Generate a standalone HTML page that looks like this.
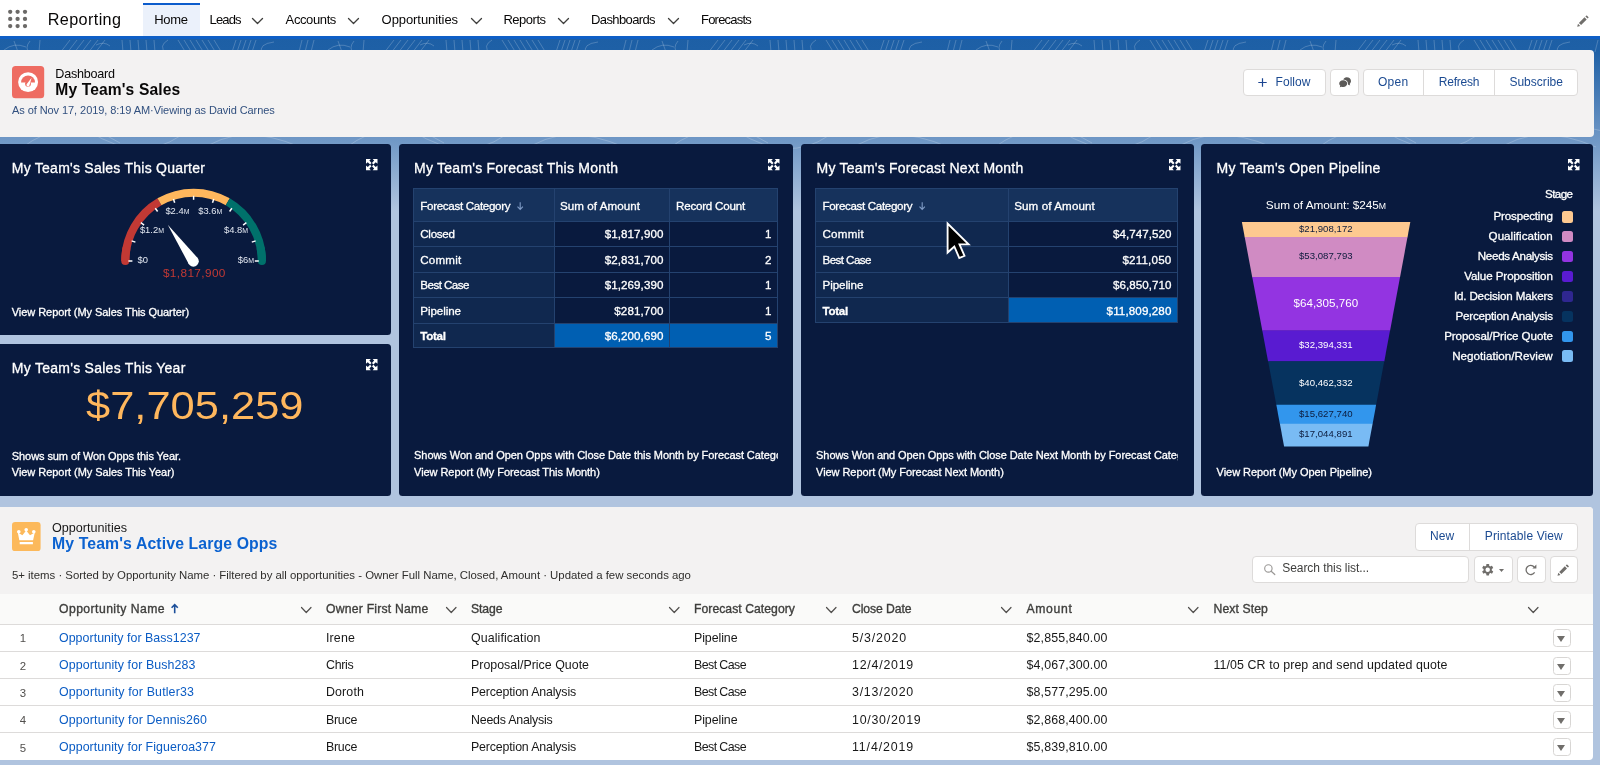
<!DOCTYPE html>
<html lang="en">
<head>
<meta charset="utf-8">
<title>My Team's Sales | Salesforce</title>
<style>
*{box-sizing:border-box;margin:0;padding:0}
html,body{width:1600px;height:765px;overflow:hidden}
body{will-change:transform;position:relative;font-family:"Liberation Sans",sans-serif;font-size:13px;color:#080707;background:#b0c4df}
.abs,.t{position:absolute;white-space:nowrap}
.t{line-height:1;display:block}
a{color:inherit;text-decoration:none}
h1,h2{font-weight:normal}
svg{position:absolute;overflow:visible}
#bg{position:absolute;left:0;top:36px;width:1600px;height:729px;background:linear-gradient(to bottom,#1d5fa5 0,#1e60a6 14px,#b0c4df 175px,#b0c4df 100%)}
#nav{position:absolute;left:0;top:0;width:1600px;height:39px;background:#fff;border-bottom:3px solid #0e5fc6}
#nav .t{color:#080707}
#hometab{position:absolute;left:142.7px;top:3px;width:57px;height:33px;background:#ebf1fb;border-top:2px solid #0c5ccc}
#hdr{position:absolute;left:-4px;top:50px;width:1597.5px;height:87px;background:#f3f2f2;border-radius:4px}
.btn{position:absolute;background:#fff;border:1px solid #dddbda;border-radius:4px}
.bt{color:#1b4a91}
.panel{position:absolute;background:#091a3e;border-radius:3.5px}
.ttl{color:#fff;-webkit-text-stroke:.3px #fff}
.ft{color:#fff;-webkit-text-stroke:.3px #fff}
.cell{position:absolute;border:1px solid #24426f}
.ct{color:#fff;-webkit-text-stroke:.3px #fff}
#list{position:absolute;left:-4px;top:507px;width:1597px;height:253.4px;background:#fff;border-radius:4px;overflow:hidden}
#listhd{position:absolute;left:0;top:507px;width:1593px;height:87px;background:#f3f2f2;border-radius:0 4px 0 0}
#colhd{position:absolute;left:0;top:594.3px;width:1593px;height:30.7px;background:#fafaf9;border-bottom:1px solid #dddbda}
.rline{position:absolute;left:0;width:1593px;height:1px;background:#dddbda}
.rt{color:#181818}
.lk{color:#0b5cc4}
.ch{color:#3e3e3c;-webkit-text-stroke:.35px #3e3e3c}
.rb{position:absolute;left:1553px;width:18px;height:18px;border:1px solid #d8d6d4;border-radius:3.5px;background:#fff}
.rb:after{content:"";position:absolute;left:3.3px;top:6px;border:4.7px solid transparent;border-top:6.4px solid #706e6b;border-bottom:0}
</style>
</head>
<body>
<div id="bg"></div>
<svg id="bgpat" style="left:0;top:39px" width="1600" height="120"><defs><pattern id="pt" width="324" height="120" patternUnits="userSpaceOnUse"><path d="M70.0 1.0 L60.0 14.0 M77.0 1.0 L67.0 14.0 M84.0 1.0 L74.0 14.0 M91.0 1.0 L81.0 14.0 M98.0 1.0 L88.0 14.0 M105.0 1.0 L95.0 14.0 M122.0 1.0 L123.0 13.0 M130.0 1.0 L131.0 13.0 M138.0 1.0 L139.0 13.0 M146.0 1.0 L147.0 13.0 M154.0 1.0 L155.0 13.0 M178.0 1.0 L186.0 14.0 M184.0 1.0 L192.0 14.0 M190.0 1.0 L198.0 14.0 M196.0 1.0 L204.0 14.0 M202.0 1.0 L210.0 14.0 M208.0 1.0 L216.0 14.0 M214.0 1.0 L222.0 14.0 M236.0 1.0 L232.0 13.0 M241.0 1.0 L237.0 13.0 M246.0 1.0 L242.0 13.0 M251.0 1.0 L247.0 13.0 M256.0 1.0 L252.0 13.0 M302.0 1.0 L299.0 13.0 M308.0 1.0 L305.0 13.0 M314.0 1.0 L311.0 13.0 M4 11 Q14 3 26 8 M30 2 Q24 9 30 15 M166 14 Q158 7 168 1 M262 14 Q258 5 274 3 M96 6 Q104 2 110 7 M14 2 L18 13 M40 1 L39 13 M0 96 Q40 62 90 93 T180 97 T324 96 M20 110 Q70 72 120 104 M200 112 Q240 82 300 108 M140 89 Q160 72 185 85 M40 82 Q60 100 85 83 M230 91 Q250 74 270 93" fill="none" stroke="#fff" stroke-width="1" stroke-opacity=".2"/></pattern></defs><rect width="1600" height="120" fill="url(#pt)"/></svg>
<div id="nav">
<svg style="left:0;top:0" width="40" height="36"><circle cx="10.2" cy="11.8" r="2.15" fill="#6b6967"/><circle cx="17.6" cy="11.8" r="2.15" fill="#6b6967"/><circle cx="25" cy="11.8" r="2.15" fill="#6b6967"/><circle cx="10.2" cy="18.95" r="2.15" fill="#6b6967"/><circle cx="17.6" cy="18.95" r="2.15" fill="#6b6967"/><circle cx="25" cy="18.95" r="2.15" fill="#6b6967"/><circle cx="10.2" cy="26.1" r="2.15" fill="#6b6967"/><circle cx="17.6" cy="26.1" r="2.15" fill="#6b6967"/><circle cx="25" cy="26.1" r="2.15" fill="#6b6967"/></svg>
<span class="t" style="left:47.80px;top:11.00px;font-size:16.2px;letter-spacing:0.377px">Reporting</span>
<div id="hometab"></div>
<span class="t" style="left:154.20px;top:13.00px;font-size:13px;letter-spacing:-0.322px">Home</span>
<span class="t" style="left:209.60px;top:13.00px;font-size:13px;letter-spacing:-0.864px">Leads</span><svg style="left:252.3px;top:17.8px" width="11" height="6" viewBox="0 0 11 6"><path d="M0.5 0.5 L5.5 5.5 L10.5 0.5" fill="none" stroke="#3e3e3c" stroke-width="1.3" stroke-linecap="round" stroke-linejoin="round"/></svg>
<span class="t" style="left:285.60px;top:13.00px;font-size:13px;letter-spacing:-0.386px">Accounts</span><svg style="left:348px;top:17.8px" width="11" height="6" viewBox="0 0 11 6"><path d="M0.5 0.5 L5.5 5.5 L10.5 0.5" fill="none" stroke="#3e3e3c" stroke-width="1.3" stroke-linecap="round" stroke-linejoin="round"/></svg>
<span class="t" style="left:381.60px;top:13.00px;font-size:13px;letter-spacing:-0.071px">Opportunities</span><svg style="left:470.6px;top:17.8px" width="11" height="6" viewBox="0 0 11 6"><path d="M0.5 0.5 L5.5 5.5 L10.5 0.5" fill="none" stroke="#3e3e3c" stroke-width="1.3" stroke-linecap="round" stroke-linejoin="round"/></svg>
<span class="t" style="left:503.40px;top:13.00px;font-size:13px;letter-spacing:-0.476px">Reports</span><svg style="left:557.5px;top:17.8px" width="11" height="6" viewBox="0 0 11 6"><path d="M0.5 0.5 L5.5 5.5 L10.5 0.5" fill="none" stroke="#3e3e3c" stroke-width="1.3" stroke-linecap="round" stroke-linejoin="round"/></svg>
<span class="t" style="left:591.00px;top:13.00px;font-size:13px;letter-spacing:-0.611px">Dashboards</span><svg style="left:667.5px;top:17.8px" width="11" height="6" viewBox="0 0 11 6"><path d="M0.5 0.5 L5.5 5.5 L10.5 0.5" fill="none" stroke="#3e3e3c" stroke-width="1.3" stroke-linecap="round" stroke-linejoin="round"/></svg>
<span class="t" style="left:701.00px;top:13.00px;font-size:13px;letter-spacing:-0.786px">Forecasts</span>
<svg style="left:1576.9px;top:14.8px" width="12" height="12" viewBox="0 0 12 12"><path d="M0.2 11.8 L1 8.8 L3.2 11 Z M1.9 7.9 L7.5 2.3 L9.7 4.5 L4.1 10.1 Z M8.4 1.4 L9.1 0.7 Q9.6 0.2 10.1 0.7 L11.3 1.9 Q11.8 2.4 11.3 2.9 L10.6 3.6 Z" fill="#706e6b"/></svg>
</div>
<div id="hdr"></div>
<svg style="left:12px;top:65.6px" width="32.2" height="32.2" viewBox="0 0 32 32"><rect width="32" height="32" rx="3.5" fill="#ee6c62"/><circle cx="16" cy="16" r="9.9" fill="#fff"/><path d="M9 16.4 A6.95 6.95 0 0 1 22.9 16.4 Z" fill="#ee6c62"/><circle cx="15.9" cy="17.7" r="2.9" fill="#ee6c62"/><path d="M14.5 18.2 L19.5 11.6 L17.3 19.3 A1.5 1.5 0 0 1 14.5 18.2 Z" fill="#fff"/></svg>
<span class="t" style="left:55.30px;top:68.00px;font-size:12.6px;letter-spacing:-0.236px;color:#080707">Dashboard</span>
<h1 class="t" style="left:55.30px;top:82.00px;font-size:15.6px;letter-spacing:0.130px;color:#080707;font-weight:bold">My Team's Sales</h1>
<span class="t" style="left:12.00px;top:105.00px;font-size:11px;letter-spacing:-0.072px;color:#31507f">As of Nov 17, 2019, 8:19 AM·Viewing as David Carnes</span>
<div class="btn" style="left:1242.5px;top:68.7px;width:83.3px;height:27.6px"></div><svg style="left:1258.2px;top:78px" width="9" height="9" viewBox="0 0 9 9"><path d="M4.5 0.3V8.7M0.3 4.5H8.7" stroke="#1c4591" stroke-width="1.2" fill="none"/></svg><span class="t bt" style="left:1275.60px;top:76.00px;font-size:12px;letter-spacing:0.035px">Follow</span>
<div class="btn" style="left:1330.4px;top:68.7px;width:28.2px;height:27.6px"></div><svg style="left:1338.7px;top:77.2px" width="12.2" height="10.4" viewBox="0 0 12.2 10.4"><path d="M7.6 0.2 C10.3 0.2 12 1.9 12 4.1 C12 5.2 11.5 6.2 10.7 6.9 L11.2 8.6 L9.6 7.7 C9.4 7.8 9.2 7.8 9 7.9 C9.3 5 7.5 2.7 4.2 2.6 C4.8 1.1 6 0.2 7.6 0.2 Z" fill="#5c5a58"/><path d="M4.1 3.2 C6.5 3.2 8.2 4.7 8.2 6.6 C8.2 8.5 6.5 10 4.1 10 C3.6 10 3.1 9.9 2.7 9.8 L0.8 10.3 L1.3 8.8 C0.6 8.2 0.2 7.4 0.2 6.6 C0.2 4.7 1.8 3.2 4.1 3.2 Z" fill="#5c5a58"/></svg>
<div class="btn" style="left:1363px;top:68.7px;width:214.6px;height:27.6px"></div><div class="abs" style="left:1423.3px;top:69.7px;width:1px;height:25.6px;background:#dddbda"></div><div class="abs" style="left:1494px;top:69.7px;width:1px;height:25.6px;background:#dddbda"></div><span class="t bt" style="left:1378.00px;top:76.00px;font-size:12px;letter-spacing:0.285px">Open</span><span class="t bt" style="left:1438.80px;top:76.00px;font-size:12px;letter-spacing:-0.219px">Refresh</span><span class="t bt" style="left:1509.40px;top:76.00px;font-size:12px;letter-spacing:0.025px">Subscribe</span>
<div class="panel" style="left:-4px;top:144.2px;width:395px;height:191.3px"></div>
<h2 class="t ttl" style="left:11.80px;top:161.00px;font-size:14px;letter-spacing:0.244px">My Team's Sales This Quarter</h2><svg style="left:365.8px;top:159px" width="11.5" height="11.2" viewBox="0 0 11.5 11.2"><g transform="translate(5.75 5.6) scale(1 1)"><path d="M-5.75 -5.6 H-0.9 L-2.4 -4 L-0.2 -1.7 L-1.7 -0.2 L-4 -2.4 L-5.75 -0.8 Z" fill="#fff"/></g><g transform="translate(5.75 5.6) scale(-1 1)"><path d="M-5.75 -5.6 H-0.9 L-2.4 -4 L-0.2 -1.7 L-1.7 -0.2 L-4 -2.4 L-5.75 -0.8 Z" fill="#fff"/></g><g transform="translate(5.75 5.6) scale(1 -1)"><path d="M-5.75 -5.6 H-0.9 L-2.4 -4 L-0.2 -1.7 L-1.7 -0.2 L-4 -2.4 L-5.75 -0.8 Z" fill="#fff"/></g><g transform="translate(5.75 5.6) scale(-1 -1)"><path d="M-5.75 -5.6 H-0.9 L-2.4 -4 L-0.2 -1.7 L-1.7 -0.2 L-4 -2.4 L-5.75 -0.8 Z" fill="#fff"/></g></svg>
<svg style="left:0;top:0" width="391" height="340"><path d="M125.30 261.00 A68.3 68.3 0 0 1 126.34 249.14" fill="none" stroke="#c23934" stroke-width="8.1" stroke-linecap="round"/><path d="M260.86 249.14 A68.3 68.3 0 0 1 261.90 261.00" fill="none" stroke="#00716b" stroke-width="8.1" stroke-linecap="round"/><path d="M125.30 261.00 A68.3 68.3 0 0 1 159.45 201.85" fill="none" stroke="#c23934" stroke-width="8.1" stroke-linecap="butt"/><path d="M159.45 201.85 A68.3 68.3 0 0 1 227.75 201.85" fill="none" stroke="#ffb75d" stroke-width="8.1" stroke-linecap="butt"/><path d="M227.75 201.85 A68.3 68.3 0 0 1 261.90 261.00" fill="none" stroke="#00716b" stroke-width="8.1" stroke-linecap="butt"/><path d="M128.40 261.00 L132.40 261.00" stroke="#fff" stroke-width="1.5"/><path d="M131.59 240.85 L135.40 242.09" stroke="#fff" stroke-width="1.5"/><path d="M140.85 222.68 L144.09 225.03" stroke="#fff" stroke-width="1.5"/><path d="M155.28 208.25 L157.63 211.49" stroke="#fff" stroke-width="1.5"/><path d="M173.45 198.99 L174.69 202.80" stroke="#fff" stroke-width="1.5"/><path d="M193.60 195.80 L193.60 199.80" stroke="#fff" stroke-width="1.5"/><path d="M213.75 198.99 L212.51 202.80" stroke="#fff" stroke-width="1.5"/><path d="M231.92 208.25 L229.57 211.49" stroke="#fff" stroke-width="1.5"/><path d="M246.35 222.68 L243.11 225.03" stroke="#fff" stroke-width="1.5"/><path d="M255.61 240.85 L251.80 242.09" stroke="#fff" stroke-width="1.5"/><path d="M258.80 261.00 L254.80 261.00" stroke="#fff" stroke-width="1.5"/><path d="M167.78 224.76 L197.80 258.17 L189.00 264.43 Z" fill="#fff"/><circle cx="193.4" cy="261.3" r="5.4" fill="#fff"/></svg><span class="t" style="left:137.60px;top:255.00px;font-size:9.4px;letter-spacing:-0.169px;color:#e4e9f2">$0</span><span class="t" style="left:139.90px;top:225.00px;font-size:9.4px;letter-spacing:0.018px;color:#e4e9f2">$1.2<span style="font-size:6.96px">M</span></span><span class="t" style="left:165.40px;top:206.00px;font-size:9.4px;letter-spacing:0.008px;color:#e4e9f2">$2.4<span style="font-size:6.96px">M</span></span><span class="t" style="left:198.20px;top:206.00px;font-size:9.4px;color:#e4e9f2">$3.6<span style="font-size:6.96px">M</span></span><span class="t" style="left:224.00px;top:225.00px;font-size:9.4px;color:#e4e9f2">$4.8<span style="font-size:6.96px">M</span></span><span class="t" style="left:237.70px;top:255.00px;font-size:9.4px;letter-spacing:0.009px;color:#e4e9f2">$6<span style="font-size:6.96px">M</span></span><span class="t" style="left:162.90px;top:268.00px;font-size:11.8px;letter-spacing:0.385px;color:#c23934">$1,817,900</span>
<a class="t ft" style="left:11.80px;top:307.00px;font-size:11px;letter-spacing:-0.061px">View Report (My Sales This Quarter)</a>
<div class="panel" style="left:-4px;top:344.3px;width:395px;height:151.5px"></div>
<h2 class="t ttl" style="left:11.80px;top:361.00px;font-size:14px;letter-spacing:0.267px">My Team's Sales This Year</h2><svg style="left:365.8px;top:359px" width="11.5" height="11.2" viewBox="0 0 11.5 11.2"><g transform="translate(5.75 5.6) scale(1 1)"><path d="M-5.75 -5.6 H-0.9 L-2.4 -4 L-0.2 -1.7 L-1.7 -0.2 L-4 -2.4 L-5.75 -0.8 Z" fill="#fff"/></g><g transform="translate(5.75 5.6) scale(-1 1)"><path d="M-5.75 -5.6 H-0.9 L-2.4 -4 L-0.2 -1.7 L-1.7 -0.2 L-4 -2.4 L-5.75 -0.8 Z" fill="#fff"/></g><g transform="translate(5.75 5.6) scale(1 -1)"><path d="M-5.75 -5.6 H-0.9 L-2.4 -4 L-0.2 -1.7 L-1.7 -0.2 L-4 -2.4 L-5.75 -0.8 Z" fill="#fff"/></g><g transform="translate(5.75 5.6) scale(-1 -1)"><path d="M-5.75 -5.6 H-0.9 L-2.4 -4 L-0.2 -1.7 L-1.7 -0.2 L-4 -2.4 L-5.75 -0.8 Z" fill="#fff"/></g></svg>
<span class="t" style="left:85.80px;top:386.00px;font-size:39.6px;color:#ffb75d;transform-origin:0 0;transform:scaleX(1.0980)">$7,705,259</span>
<span class="t ft" style="left:11.80px;top:451.00px;font-size:11px;letter-spacing:-0.079px">Shows sum of Won Opps this Year.</span><a class="t ft" style="left:11.80px;top:467.00px;font-size:11px;letter-spacing:-0.046px">View Report (My Sales This Year)</a>
<div class="panel" style="left:399.2px;top:144.2px;width:394.2px;height:351.6px"></div>
<h2 class="t ttl" style="left:414.10px;top:161.00px;font-size:14px;letter-spacing:0.236px">My Team's Forecast This Month</h2><svg style="left:767.7px;top:159px" width="11.5" height="11.2" viewBox="0 0 11.5 11.2"><g transform="translate(5.75 5.6) scale(1 1)"><path d="M-5.75 -5.6 H-0.9 L-2.4 -4 L-0.2 -1.7 L-1.7 -0.2 L-4 -2.4 L-5.75 -0.8 Z" fill="#fff"/></g><g transform="translate(5.75 5.6) scale(-1 1)"><path d="M-5.75 -5.6 H-0.9 L-2.4 -4 L-0.2 -1.7 L-1.7 -0.2 L-4 -2.4 L-5.75 -0.8 Z" fill="#fff"/></g><g transform="translate(5.75 5.6) scale(1 -1)"><path d="M-5.75 -5.6 H-0.9 L-2.4 -4 L-0.2 -1.7 L-1.7 -0.2 L-4 -2.4 L-5.75 -0.8 Z" fill="#fff"/></g><g transform="translate(5.75 5.6) scale(-1 -1)"><path d="M-5.75 -5.6 H-0.9 L-2.4 -4 L-0.2 -1.7 L-1.7 -0.2 L-4 -2.4 L-5.75 -0.8 Z" fill="#fff"/></g></svg>
<div class="cell" style="left:413px;top:188px;width:142px;height:34px;background:#16325c"></div><div class="cell" style="left:554px;top:188px;width:116px;height:34px;background:#16325c"></div><div class="cell" style="left:669px;top:188px;width:109px;height:34px;background:#16325c"></div><div class="cell" style="left:413px;top:221px;width:142px;height:26px;background:#10284f"></div><div class="cell" style="left:554px;top:221px;width:116px;height:26px;background:#091a3e"></div><div class="cell" style="left:669px;top:221px;width:109px;height:26px;background:#091a3e"></div><div class="cell" style="left:413px;top:246px;width:142px;height:27px;background:#10284f"></div><div class="cell" style="left:554px;top:246px;width:116px;height:27px;background:#091a3e"></div><div class="cell" style="left:669px;top:246px;width:109px;height:27px;background:#091a3e"></div><div class="cell" style="left:413px;top:272px;width:142px;height:26px;background:#10284f"></div><div class="cell" style="left:554px;top:272px;width:116px;height:26px;background:#091a3e"></div><div class="cell" style="left:669px;top:272px;width:109px;height:26px;background:#091a3e"></div><div class="cell" style="left:413px;top:297px;width:142px;height:27px;background:#10284f"></div><div class="cell" style="left:554px;top:297px;width:116px;height:27px;background:#091a3e"></div><div class="cell" style="left:669px;top:297px;width:109px;height:27px;background:#091a3e"></div><div class="cell" style="left:413px;top:323px;width:142px;height:25px;background:#10284f"></div><div class="cell" style="left:554px;top:323px;width:116px;height:25px;background:#005fb2"></div><div class="cell" style="left:669px;top:323px;width:109px;height:25px;background:#005fb2"></div>
<span class="t ct" style="left:420.30px;top:200.00px;font-size:11.6px;letter-spacing:-0.322px">Forecast Category</span><span class="t ct" style="left:560.00px;top:200.00px;font-size:11.6px;letter-spacing:0.064px">Sum of Amount</span><span class="t ct" style="left:676.00px;top:200.00px;font-size:11.6px;letter-spacing:-0.221px">Record Count</span><svg style="left:516.9px;top:201.9px" width="6.4" height="8" viewBox="0 0 6.4 8"><path d="M3.2 0.3V7.2M0.5 4.6L3.2 7.4L5.9 4.6" fill="none" stroke="#7f9bc6" stroke-width="1.1"/></svg>
<span class="t ct" style="left:420.30px;top:228.00px;font-size:11.6px;letter-spacing:-0.299px">Closed</span><span class="t ct" style="left:604.70px;top:228.00px;font-size:11.6px;letter-spacing:0.077px">$1,817,900</span><span class="t ct" style="left:765.05px;top:228.00px;font-size:11.6px">1</span>
<span class="t ct" style="left:420.30px;top:254.00px;font-size:11.6px;letter-spacing:0.177px">Commit</span><span class="t ct" style="left:604.70px;top:254.00px;font-size:11.6px;letter-spacing:0.077px">$2,831,700</span><span class="t ct" style="left:765.05px;top:254.00px;font-size:11.6px">2</span>
<span class="t ct" style="left:420.30px;top:279.00px;font-size:11.6px;letter-spacing:-0.544px">Best Case</span><span class="t ct" style="left:604.70px;top:279.00px;font-size:11.6px;letter-spacing:0.077px">$1,269,390</span><span class="t ct" style="left:765.05px;top:279.00px;font-size:11.6px">1</span>
<span class="t ct" style="left:420.30px;top:305.00px;font-size:11.6px;letter-spacing:-0.071px">Pipeline</span><span class="t ct" style="left:614.30px;top:305.00px;font-size:11.6px;letter-spacing:0.105px">$281,700</span><span class="t ct" style="left:765.05px;top:305.00px;font-size:11.6px">1</span>
<span class="t ct" style="left:420.30px;top:330.00px;font-size:11.6px;letter-spacing:-0.309px;font-weight:bold">Total</span><span class="t ct" style="left:604.70px;top:330.00px;font-size:11.6px;letter-spacing:0.077px">$6,200,690</span><span class="t ct" style="left:765.05px;top:330.00px;font-size:11.6px">5</span>
<div class="abs" style="left:414.1px;top:445px;width:364.3px;height:20px;overflow:hidden"><span class="t ft" style="left:0.00px;top:5.00px;font-size:11px;letter-spacing:-0.062px">Shows Won and Open Opps with Close Date this Month by Forecast Category</span></div><a class="t ft" style="left:414.10px;top:467.00px;font-size:11px;letter-spacing:-0.061px">View Report (My Forecast This Month)</a>
<div class="panel" style="left:801px;top:144.2px;width:393.2px;height:351.6px"></div>
<h2 class="t ttl" style="left:816.60px;top:161.00px;font-size:14px;letter-spacing:0.236px">My Team's Forecast Next Month</h2><svg style="left:1168.6px;top:159px" width="11.5" height="11.2" viewBox="0 0 11.5 11.2"><g transform="translate(5.75 5.6) scale(1 1)"><path d="M-5.75 -5.6 H-0.9 L-2.4 -4 L-0.2 -1.7 L-1.7 -0.2 L-4 -2.4 L-5.75 -0.8 Z" fill="#fff"/></g><g transform="translate(5.75 5.6) scale(-1 1)"><path d="M-5.75 -5.6 H-0.9 L-2.4 -4 L-0.2 -1.7 L-1.7 -0.2 L-4 -2.4 L-5.75 -0.8 Z" fill="#fff"/></g><g transform="translate(5.75 5.6) scale(1 -1)"><path d="M-5.75 -5.6 H-0.9 L-2.4 -4 L-0.2 -1.7 L-1.7 -0.2 L-4 -2.4 L-5.75 -0.8 Z" fill="#fff"/></g><g transform="translate(5.75 5.6) scale(-1 -1)"><path d="M-5.75 -5.6 H-0.9 L-2.4 -4 L-0.2 -1.7 L-1.7 -0.2 L-4 -2.4 L-5.75 -0.8 Z" fill="#fff"/></g></svg>
<div class="cell" style="left:815px;top:188px;width:194px;height:34px;background:#16325c"></div><div class="cell" style="left:1008px;top:188px;width:170px;height:34px;background:#16325c"></div><div class="cell" style="left:815px;top:221px;width:194px;height:26px;background:#10284f"></div><div class="cell" style="left:1008px;top:221px;width:170px;height:26px;background:#091a3e"></div><div class="cell" style="left:815px;top:246px;width:194px;height:27px;background:#10284f"></div><div class="cell" style="left:1008px;top:246px;width:170px;height:27px;background:#091a3e"></div><div class="cell" style="left:815px;top:272px;width:194px;height:26px;background:#10284f"></div><div class="cell" style="left:1008px;top:272px;width:170px;height:26px;background:#091a3e"></div><div class="cell" style="left:815px;top:297px;width:194px;height:26px;background:#10284f"></div><div class="cell" style="left:1008px;top:297px;width:170px;height:26px;background:#005fb2"></div>
<span class="t ct" style="left:822.50px;top:200.00px;font-size:11.6px;letter-spacing:-0.334px">Forecast Category</span><span class="t ct" style="left:1014.20px;top:200.00px;font-size:11.6px;letter-spacing:0.110px">Sum of Amount</span><svg style="left:918.9px;top:201.9px" width="6.4" height="8" viewBox="0 0 6.4 8"><path d="M3.2 0.3V7.2M0.5 4.6L3.2 7.4L5.9 4.6" fill="none" stroke="#7f9bc6" stroke-width="1.1"/></svg>
<span class="t ct" style="left:822.50px;top:228.00px;font-size:11.6px;letter-spacing:0.244px">Commit</span><span class="t ct" style="left:1113.10px;top:228.00px;font-size:11.6px;letter-spacing:0.037px">$4,747,520</span>
<span class="t ct" style="left:822.50px;top:254.00px;font-size:11.6px;letter-spacing:-0.567px">Best Case</span><span class="t ct" style="left:1122.40px;top:254.00px;font-size:11.6px;letter-spacing:0.200px">$211,050</span>
<span class="t ct" style="left:822.50px;top:279.00px;font-size:11.6px;letter-spacing:-0.058px">Pipeline</span><span class="t ct" style="left:1113.10px;top:279.00px;font-size:11.6px;letter-spacing:0.037px">$6,850,710</span>
<span class="t ct" style="left:822.50px;top:305.00px;font-size:11.6px;letter-spacing:-0.309px;font-weight:bold">Total</span><span class="t ct" style="left:1106.60px;top:305.00px;font-size:11.6px;letter-spacing:0.116px">$11,809,280</span>
<div class="abs" style="left:816.1px;top:445px;width:362.3px;height:20px;overflow:hidden"><span class="t ft" style="left:0.00px;top:5.00px;font-size:11px;letter-spacing:-0.069px">Shows Won and Open Opps with Close Date Next Month by Forecast Category</span></div><a class="t ft" style="left:816.10px;top:467.00px;font-size:11px;letter-spacing:-0.062px">View Report (My Forecast Next Month)</a>
<svg style="left:945.1px;top:220.9px" width="29" height="41.4" viewBox="0 0 28 40"><path d="M2.5 2.5 L2.5 30.5 L9 24.6 L13.8 35.8 L18.8 33.6 L14 22.6 L22.8 22.6 Z" fill="#000" stroke="#fff" stroke-width="1.8" stroke-linejoin="miter"/></svg>
<div class="panel" style="left:1201.2px;top:144.2px;width:391.8px;height:351.6px"></div>
<h2 class="t ttl" style="left:1216.60px;top:161.00px;font-size:14px;letter-spacing:0.254px">My Team's Open Pipeline</h2><svg style="left:1568.2px;top:159px" width="11.5" height="11.2" viewBox="0 0 11.5 11.2"><g transform="translate(5.75 5.6) scale(1 1)"><path d="M-5.75 -5.6 H-0.9 L-2.4 -4 L-0.2 -1.7 L-1.7 -0.2 L-4 -2.4 L-5.75 -0.8 Z" fill="#fff"/></g><g transform="translate(5.75 5.6) scale(-1 1)"><path d="M-5.75 -5.6 H-0.9 L-2.4 -4 L-0.2 -1.7 L-1.7 -0.2 L-4 -2.4 L-5.75 -0.8 Z" fill="#fff"/></g><g transform="translate(5.75 5.6) scale(1 -1)"><path d="M-5.75 -5.6 H-0.9 L-2.4 -4 L-0.2 -1.7 L-1.7 -0.2 L-4 -2.4 L-5.75 -0.8 Z" fill="#fff"/></g><g transform="translate(5.75 5.6) scale(-1 -1)"><path d="M-5.75 -5.6 H-0.9 L-2.4 -4 L-0.2 -1.7 L-1.7 -0.2 L-4 -2.4 L-5.75 -0.8 Z" fill="#fff"/></g></svg>
<svg style="left:0;top:0" width="1600" height="500"><path d="M1241.90 222.10 L1410.30 222.10 L1407.51 237.30 L1244.71 237.30 Z" fill="#fdc990"/><path d="M1244.71 237.00 L1407.51 237.00 L1400.05 277.20 L1252.22 277.20 Z" fill="#d08bc3"/><path d="M1252.22 276.90 L1400.05 276.90 L1390.04 330.70 L1262.30 330.70 Z" fill="#9334e1"/><path d="M1262.30 330.40 L1390.04 330.40 L1384.26 361.60 L1268.12 361.60 Z" fill="#591bd1"/><path d="M1268.12 361.30 L1384.26 361.30 L1376.13 405.10 L1276.32 405.10 Z" fill="#06335f"/><path d="M1276.32 404.80 L1376.13 404.80 L1372.59 424.00 L1279.88 424.00 Z" fill="#3296ed"/><path d="M1279.88 423.70 L1372.59 423.70 L1368.40 446.40 L1284.10 446.40 Z" fill="#79bbf4"/></svg>
<span class="t" style="left:1298.95px;top:224.00px;font-size:9.6px;letter-spacing:0.031px;color:#0c1b3c">$21,908,172</span><span class="t" style="left:1298.95px;top:251.00px;font-size:9.6px;letter-spacing:0.031px;color:#0c1b3c">$53,087,793</span><span class="t" style="left:1293.50px;top:297.00px;font-size:11.6px;letter-spacing:0.011px;color:#fff">$64,305,760</span><span class="t" style="left:1298.95px;top:340.00px;font-size:9.6px;letter-spacing:0.031px;color:#fff">$32,394,331</span><span class="t" style="left:1298.95px;top:378.00px;font-size:9.6px;letter-spacing:0.031px;color:#fff">$40,462,332</span><span class="t" style="left:1298.95px;top:409.00px;font-size:9.6px;letter-spacing:0.031px;color:#0c1b3c">$15,627,740</span><span class="t" style="left:1298.95px;top:429.00px;font-size:9.6px;letter-spacing:0.031px;color:#0c1b3c">$17,044,891</span>
<span class="t" style="left:1265.80px;top:200.00px;font-size:11.8px;letter-spacing:-0.021px;color:#fff">Sum of Amount: $245<span style="font-size:8.73px">M</span></span><span class="t ct" style="left:1545.10px;top:188.00px;font-size:11.6px;letter-spacing:-0.602px">Stage</span>
<div class="abs" style="left:1561.8px;top:211.05px;width:11.5px;height:11.5px;border-radius:2.5px;background:#fdc990"></div><span class="t ct" style="left:1493.50px;top:210.00px;font-size:11.6px;letter-spacing:-0.176px">Prospecting</span><div class="abs" style="left:1561.8px;top:230.97px;width:11.5px;height:11.5px;border-radius:2.5px;background:#d08bc3"></div><span class="t ct" style="left:1488.60px;top:230.00px;font-size:11.6px;letter-spacing:0.030px">Qualification</span><div class="abs" style="left:1561.8px;top:250.89px;width:11.5px;height:11.5px;border-radius:2.5px;background:#9334e1"></div><span class="t ct" style="left:1477.80px;top:250.00px;font-size:11.6px;letter-spacing:-0.305px">Needs Analysis</span><div class="abs" style="left:1561.8px;top:270.81px;width:11.5px;height:11.5px;border-radius:2.5px;background:#591bd1"></div><span class="t ct" style="left:1464.20px;top:270.00px;font-size:11.6px;letter-spacing:-0.083px">Value Proposition</span><div class="abs" style="left:1561.8px;top:290.73px;width:11.5px;height:11.5px;border-radius:2.5px;background:#2f2790"></div><span class="t ct" style="left:1453.90px;top:290.00px;font-size:11.6px;letter-spacing:-0.153px">Id. Decision Makers</span><div class="abs" style="left:1561.8px;top:310.65px;width:11.5px;height:11.5px;border-radius:2.5px;background:#06335f"></div><span class="t ct" style="left:1455.60px;top:310.00px;font-size:11.6px;letter-spacing:-0.210px">Perception Analysis</span><div class="abs" style="left:1561.8px;top:330.57px;width:11.5px;height:11.5px;border-radius:2.5px;background:#3296ed"></div><span class="t ct" style="left:1444.20px;top:330.00px;font-size:11.6px;letter-spacing:-0.080px">Proposal/Price Quote</span><div class="abs" style="left:1561.8px;top:350.49px;width:11.5px;height:11.5px;border-radius:2.5px;background:#79bbf4"></div><span class="t ct" style="left:1452.20px;top:350.00px;font-size:11.6px;letter-spacing:0.039px">Negotiation/Review</span>
<a class="t ft" style="left:1216.60px;top:467.00px;font-size:11px;letter-spacing:-0.051px">View Report (My Open Pipeline)</a>
<div id="list"></div><div id="listhd"></div><div id="colhd"></div>
<svg style="left:12px;top:521.9px" width="28.6" height="29.1" viewBox="0 0 28.6 29.1"><rect width="28.6" height="29.1" rx="3.2" fill="#fcb95b"/><path d="M5.8 10.6 L10.4 13.2 L14.2 8.6 L18 13.2 L22.8 10.6 L21.1 18.2 H7.3 Z M7.7 20.1 H20.9 V22.3 H7.7 Z" fill="#fff"/><circle cx="6.8" cy="9.7" r="1.8" fill="#fff"/><circle cx="14.2" cy="7.8" r="1.8" fill="#fff"/><circle cx="21.8" cy="9.7" r="1.8" fill="#fff"/></svg>
<span class="t" style="left:52.00px;top:522.00px;font-size:12.6px;letter-spacing:0.007px;color:#181818">Opportunities</span><h1 class="t" style="left:52.00px;top:536.00px;font-size:15.8px;letter-spacing:0.116px;color:#0b62d0;font-weight:bold">My Team's Active Large Opps</h1>
<span class="t" style="left:12.00px;top:570.00px;font-size:11.4px;letter-spacing:-0.015px;color:#2f2e2c">5+ items · Sorted by Opportunity Name · Filtered by all opportunities - Owner Full Name, Closed, Amount · Updated a few seconds ago</span>
<div class="btn" style="left:1414.6px;top:522.5px;width:163px;height:28px"></div><div class="abs" style="left:1469.2px;top:523.5px;width:1px;height:26px;background:#dddbda"></div><span class="t bt" style="left:1430.10px;top:530.00px;font-size:12px;letter-spacing:0.095px">New</span><span class="t bt" style="left:1484.80px;top:530.00px;font-size:12px;letter-spacing:0.114px">Printable View</span>
<div class="btn" style="left:1252.3px;top:555.6px;width:216.9px;height:27.6px"></div><svg style="left:1263.6px;top:564px" width="11.4" height="11" viewBox="0 0 11.4 11"><circle cx="4.4" cy="4.4" r="3.7" fill="none" stroke="#9a9896" stroke-width="1.1"/><path d="M7.2 7.2L10.8 10.5" stroke="#9a9896" stroke-width="1.2" stroke-linecap="round"/></svg><span class="t" style="left:1282.30px;top:562.00px;font-size:12px;letter-spacing:-0.070px;color:#3e3e3c">Search this list...</span>
<div class="btn" style="left:1473.5px;top:555.6px;width:39.2px;height:27.6px"></div><svg style="left:1481.9px;top:564.4px" width="11.4" height="11.4" viewBox="-5.7 -5.7 11.4 11.4"><rect x="-1.4" y="-5.7" width="2.8" height="3" rx="0.4" fill="#706e6b" transform="rotate(0)"/><rect x="-1.4" y="-5.7" width="2.8" height="3" rx="0.4" fill="#706e6b" transform="rotate(60)"/><rect x="-1.4" y="-5.7" width="2.8" height="3" rx="0.4" fill="#706e6b" transform="rotate(120)"/><rect x="-1.4" y="-5.7" width="2.8" height="3" rx="0.4" fill="#706e6b" transform="rotate(180)"/><rect x="-1.4" y="-5.7" width="2.8" height="3" rx="0.4" fill="#706e6b" transform="rotate(240)"/><rect x="-1.4" y="-5.7" width="2.8" height="3" rx="0.4" fill="#706e6b" transform="rotate(300)"/><circle r="3.2" fill="none" stroke="#706e6b" stroke-width="1.9"/></svg><svg style="left:1498.8px;top:568.5px" width="5" height="3" viewBox="0 0 5 3"><path d="M0 0H5L2.5 3Z" fill="#706e6b"/></svg>
<div class="btn" style="left:1517px;top:555.6px;width:28.6px;height:27.6px"></div><svg style="left:1525.3px;top:563.8px" width="12" height="11.6" viewBox="0 0 12 11.6"><path d="M9.6 8.4 A4.6 4.6 0 1 1 9.2 3" fill="none" stroke="#706e6b" stroke-width="1.3"/><path d="M11.4 0.6 V4.6 H7.4 Z" fill="#706e6b"/></svg>
<div class="btn" style="left:1549.7px;top:555.6px;width:28px;height:27.6px"></div><svg style="left:1557.3px;top:564px" width="12.6" height="12" viewBox="0 0 12 12"><path d="M0.2 11.8 L1 8.8 L3.2 11 Z M1.9 7.9 L7.5 2.3 L9.7 4.5 L4.1 10.1 Z M8.4 1.4 L9.1 0.7 Q9.6 0.2 10.1 0.7 L11.3 1.9 Q11.8 2.4 11.3 2.9 L10.6 3.6 Z" fill="#706e6b"/></svg>
<span class="t ch" style="left:59.00px;top:603.00px;font-size:12.2px;letter-spacing:0.443px">Opportunity Name</span><svg style="left:300.5px;top:606.5px" width="10.5" height="6" viewBox="0 0 10.5 6"><path d="M0.5 0.5 L5.25 5.5 L10 0.5" fill="none" stroke="#514f4d" stroke-width="1.2" stroke-linecap="round" stroke-linejoin="round"/></svg><span class="t ch" style="left:326.00px;top:603.00px;font-size:12.2px;letter-spacing:0.227px">Owner First Name</span><svg style="left:446px;top:606.5px" width="10.5" height="6" viewBox="0 0 10.5 6"><path d="M0.5 0.5 L5.25 5.5 L10 0.5" fill="none" stroke="#514f4d" stroke-width="1.2" stroke-linecap="round" stroke-linejoin="round"/></svg><span class="t ch" style="left:471.00px;top:603.00px;font-size:12.2px;letter-spacing:-0.072px">Stage</span><svg style="left:669px;top:606.5px" width="10.5" height="6" viewBox="0 0 10.5 6"><path d="M0.5 0.5 L5.25 5.5 L10 0.5" fill="none" stroke="#514f4d" stroke-width="1.2" stroke-linecap="round" stroke-linejoin="round"/></svg><span class="t ch" style="left:694.00px;top:603.00px;font-size:12.2px;letter-spacing:0.044px">Forecast Category</span><svg style="left:826px;top:606.5px" width="10.5" height="6" viewBox="0 0 10.5 6"><path d="M0.5 0.5 L5.25 5.5 L10 0.5" fill="none" stroke="#514f4d" stroke-width="1.2" stroke-linecap="round" stroke-linejoin="round"/></svg><span class="t ch" style="left:852.00px;top:603.00px;font-size:12.2px;letter-spacing:-0.080px">Close Date</span><svg style="left:1001px;top:606.5px" width="10.5" height="6" viewBox="0 0 10.5 6"><path d="M0.5 0.5 L5.25 5.5 L10 0.5" fill="none" stroke="#514f4d" stroke-width="1.2" stroke-linecap="round" stroke-linejoin="round"/></svg><span class="t ch" style="left:1026.50px;top:603.00px;font-size:12.2px;letter-spacing:0.664px">Amount</span><svg style="left:1188px;top:606.5px" width="10.5" height="6" viewBox="0 0 10.5 6"><path d="M0.5 0.5 L5.25 5.5 L10 0.5" fill="none" stroke="#514f4d" stroke-width="1.2" stroke-linecap="round" stroke-linejoin="round"/></svg><span class="t ch" style="left:1213.50px;top:603.00px;font-size:12.2px;letter-spacing:0.108px">Next Step</span><svg style="left:1527.5px;top:606.5px" width="10.5" height="6" viewBox="0 0 10.5 6"><path d="M0.5 0.5 L5.25 5.5 L10 0.5" fill="none" stroke="#514f4d" stroke-width="1.2" stroke-linecap="round" stroke-linejoin="round"/></svg><svg style="left:170.8px;top:603.5px" width="7.4" height="9.6" viewBox="0 0 7.4 9.6"><path d="M3.7 9.3V1M0.6 3.8L3.7 0.7L6.8 3.8" fill="none" stroke="#1c4f9a" stroke-width="1.6"/></svg>
<span class="t" style="left:19.80px;top:633.00px;font-size:11.4px;color:#514f4d">1</span><a class="t lk" style="left:59.00px;top:632.00px;font-size:12.4px;letter-spacing:0.041px">Opportunity for Bass1237</a><span class="t rt" style="left:326.00px;top:632.00px;font-size:12.4px;letter-spacing:0.150px">Irene</span><span class="t rt" style="left:471.00px;top:632.00px;font-size:12.4px;letter-spacing:0.101px">Qualification</span><span class="t rt" style="left:694.00px;top:632.00px;font-size:12.4px;letter-spacing:-0.074px">Pipeline</span><span class="t rt" style="left:852.00px;top:632.00px;font-size:12.4px;letter-spacing:0.846px">5/3/2020</span><span class="t rt" style="left:1026.50px;top:632.00px;font-size:12.4px;letter-spacing:0.135px">$2,855,840.00</span><div class="rb" style="top:629.3px"></div>
<div class="rline" style="top:650.7px"></div><span class="t" style="left:19.80px;top:661.00px;font-size:11.4px;color:#514f4d">2</span><a class="t lk" style="left:59.00px;top:659.00px;font-size:12.4px;letter-spacing:0.094px">Opportunity for Bush283</a><span class="t rt" style="left:326.00px;top:659.00px;font-size:12.4px;letter-spacing:-0.284px">Chris</span><span class="t rt" style="left:471.00px;top:659.00px;font-size:12.4px;letter-spacing:0.011px">Proposal/Price Quote</span><span class="t rt" style="left:694.00px;top:659.00px;font-size:12.4px;letter-spacing:-0.575px">Best Case</span><span class="t rt" style="left:852.00px;top:659.00px;font-size:12.4px;letter-spacing:0.764px">12/4/2019</span><span class="t rt" style="left:1026.50px;top:659.00px;font-size:12.4px;letter-spacing:0.135px">$4,067,300.00</span><span class="t rt" style="left:1213.50px;top:659.00px;font-size:12.4px;letter-spacing:0.088px">11/05 CR to prep and send updated quote</span><div class="rb" style="top:656.5px"></div>
<div class="rline" style="top:677.9px"></div><span class="t" style="left:19.80px;top:688.00px;font-size:11.4px;color:#514f4d">3</span><a class="t lk" style="left:59.00px;top:686.00px;font-size:12.4px;letter-spacing:0.143px">Opportunity for Butler33</a><span class="t rt" style="left:326.00px;top:686.00px;font-size:12.4px;letter-spacing:0.133px">Doroth</span><span class="t rt" style="left:471.00px;top:686.00px;font-size:12.4px;letter-spacing:-0.165px">Perception Analysis</span><span class="t rt" style="left:694.00px;top:686.00px;font-size:12.4px;letter-spacing:-0.575px">Best Case</span><span class="t rt" style="left:852.00px;top:686.00px;font-size:12.4px;letter-spacing:0.764px">3/13/2020</span><span class="t rt" style="left:1026.50px;top:686.00px;font-size:12.4px;letter-spacing:0.135px">$8,577,295.00</span><div class="rb" style="top:683.7px"></div>
<div class="rline" style="top:705.1px"></div><span class="t" style="left:19.80px;top:715.00px;font-size:11.4px;color:#514f4d">4</span><a class="t lk" style="left:59.00px;top:714.00px;font-size:12.4px;letter-spacing:0.134px">Opportunity for Dennis260</a><span class="t rt" style="left:326.00px;top:714.00px;font-size:12.4px;letter-spacing:-0.275px">Bruce</span><span class="t rt" style="left:471.00px;top:714.00px;font-size:12.4px;letter-spacing:-0.230px">Needs Analysis</span><span class="t rt" style="left:694.00px;top:714.00px;font-size:12.4px;letter-spacing:-0.074px">Pipeline</span><span class="t rt" style="left:852.00px;top:714.00px;font-size:12.4px;letter-spacing:0.748px">10/30/2019</span><span class="t rt" style="left:1026.50px;top:714.00px;font-size:12.4px;letter-spacing:0.135px">$2,868,400.00</span><div class="rb" style="top:710.9px"></div>
<div class="rline" style="top:732.3px"></div><span class="t" style="left:19.80px;top:743.00px;font-size:11.4px;color:#514f4d">5</span><a class="t lk" style="left:59.00px;top:741.00px;font-size:12.4px;letter-spacing:0.075px">Opportunity for Figueroa377</a><span class="t rt" style="left:326.00px;top:741.00px;font-size:12.4px;letter-spacing:-0.275px">Bruce</span><span class="t rt" style="left:471.00px;top:741.00px;font-size:12.4px;letter-spacing:-0.165px">Perception Analysis</span><span class="t rt" style="left:694.00px;top:741.00px;font-size:12.4px;letter-spacing:-0.575px">Best Case</span><span class="t rt" style="left:852.00px;top:741.00px;font-size:12.4px;letter-spacing:0.866px">11/4/2019</span><span class="t rt" style="left:1026.50px;top:741.00px;font-size:12.4px;letter-spacing:0.135px">$5,839,810.00</span><div class="rb" style="top:738.1px"></div>
</body>
</html>
